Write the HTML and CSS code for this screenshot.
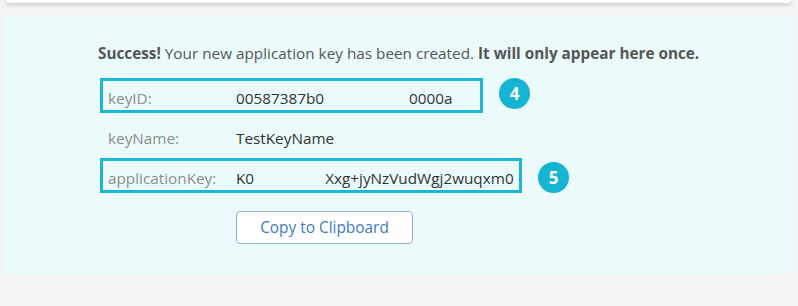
FILE: index.html
```html
<!DOCTYPE html>
<html>
<head>
<meta charset="utf-8">
<link rel="stylesheet" href="styles.css">
</head>
<body>
<div class="topcard"></div>
<div class="panel">
  <p class="msg"><b>Success!</b> Your new application key has been created. <b>It will only appear here once.</b></p>
  <div class="rows">
    <div class="row">
      <div class="box box-id">
        <span class="label">keyID:</span>
        <span class="value">00587387b0<span class="gap1"></span>0000a</span>
      </div>
      <span class="badge">4</span>
    </div>
    <div class="row plain">
      <span class="label">keyName:</span>
      <span class="value">TestKeyName</span>
    </div>
    <div class="row">
      <div class="box box-app">
        <span class="label">applicationKey:</span>
        <span class="value">K0<span class="gap2"></span>Xxg+jyNzVudWgj2wuqxm0</span>
      </div>
      <span class="badge b5">5</span>
    </div>
    <div class="btnrow">
      <button class="copy">Copy to Clipboard</button>
    </div>
  </div>
</div>
</body>
</html>
```
FILE: styles.css
```css
html, body {
  margin: 0;
  padding: 0;
  background: #f4f4f5;
  font-family: "Open Sans", "Noto Sans", sans-serif;
  width: 798px;
  height: 306px;
  overflow: hidden;
}
.topcard {
  height: 3px;
  margin: 0 7px 0 6px;
  background: #fff;
  border-radius: 0 0 4px 4px;
  box-shadow: 0 1px 4px rgba(0, 0, 0, 0.28);
}
.panel {
  margin: 13px 0 0 4px;
  width: 788px;
  height: 258px;
  box-sizing: border-box;
  background: #ebfbfc;
  padding: 27px 0 0 94px;
}
.msg {
  margin: 0;
  font-size: 15.3px;
  line-height: 20px;
  color: #555;
}
.msg b { font-weight: 700; }
.rows {
  margin-top: 15px;
  margin-left: 2px;
  display: flex;
  flex-direction: column;
}
.row {
  display: flex;
  align-items: center;
}
.box {
  box-sizing: border-box;
  height: 35px;
  border: 3px solid #1ab7d3;
  display: flex;
  align-items: center;
  padding: 4px 0 0 5px;
}
.box-id { width: 383px; }
.box-app { width: 422px; }
.label {
  width: 128px;
  flex: none;
  font-size: 15.3px;
  color: #8c8c8c;
}
.value {
  font-size: 15.3px;
  color: #333;
  white-space: nowrap;
}
.gap1 { display: inline-block; width: 85px; }
.gap2 { display: inline-block; width: 71px; }
.plain {
  height: 45px;
  padding: 5px 0 0 8px;
  box-sizing: border-box;
}
.badge {
  width: 31px;
  height: 31px;
  border-radius: 50%;
  background: #14b4d2;
  color: #fff;
  font-weight: 700;
  font-size: 17px;
  display: flex;
  align-items: center;
  justify-content: center;
  margin-left: 16px;
  margin-top: -5px;
}
.b5 { margin-top: 3px; }
.btnrow {
  margin-top: 18px;
  padding-left: 136px;
}
.copy {
  width: 177px;
  height: 33px;
  background: #fff;
  border: 1px solid #8eb2dc;
  border-radius: 4px;
  color: #3d7ac4;
  font-family: "Open Sans", "Noto Sans", sans-serif;
  font-size: 15.4px;
  padding: 0;
}
```
